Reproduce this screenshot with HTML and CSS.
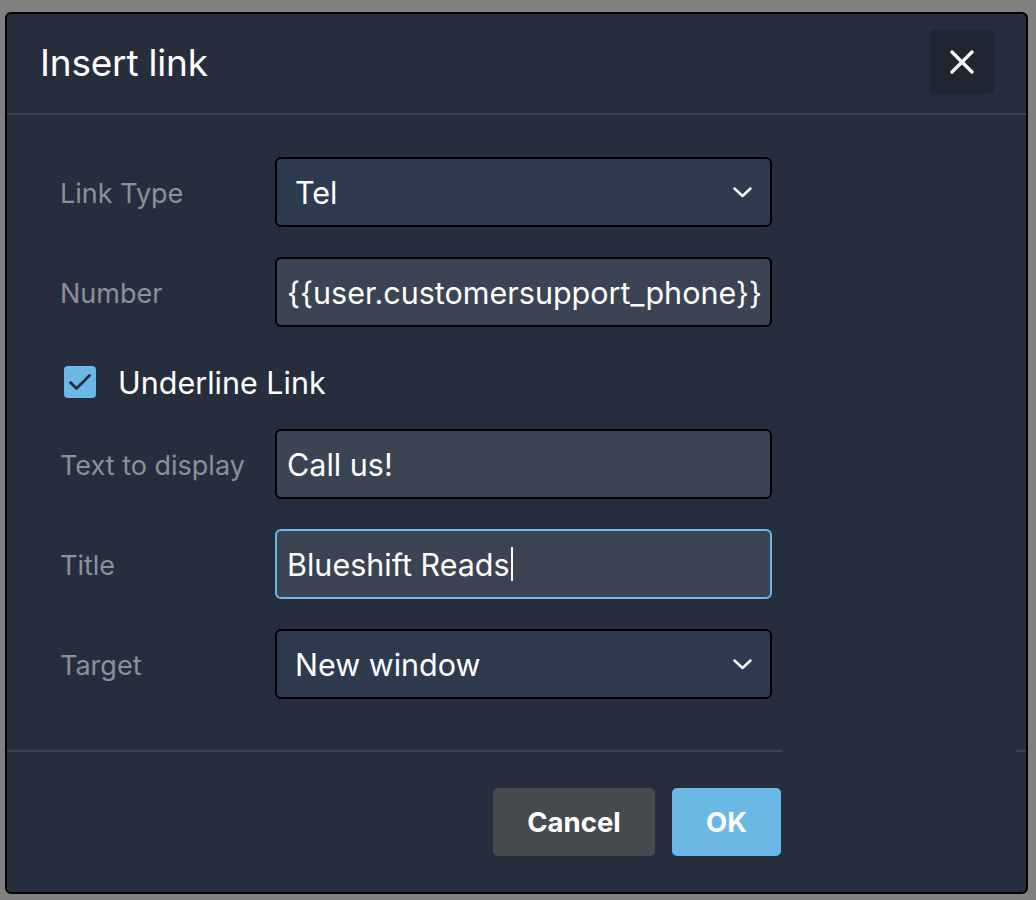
FILE: index.html
```html
<!DOCTYPE html>
<html>
<head>
<meta charset="utf-8">
<link rel="stylesheet" href="styles.css">
</head>
<body>
<div class="dialog">
  <div class="header">
    <h1 class="title">Insert link</h1>
    <button class="close" aria-label="Close">
      <svg width="24" height="24" viewBox="0 0 24 24"><path d="M2 2 L22 22 M22 2 L2 22" stroke="#fff" stroke-width="3.2" stroke-linecap="round" fill="none"/></svg>
    </button>
  </div>
  <div class="body">
    <div class="row">
      <div class="label">Link Type</div>
      <div class="field select">
        <span class="value">Tel</span>
        <svg class="chev" width="19" height="11" viewBox="0 0 19 11"><path d="M1.5 1.5 L9.5 9 L17.5 1.5" stroke="#fff" stroke-width="2.4" fill="none" stroke-linecap="round" stroke-linejoin="round"/></svg>
      </div>
    </div>
    <div class="row">
      <div class="label">Number</div>
      <div class="field input"><span class="value nowrap">{{user.customersupport_phone}}</span></div>
    </div>
    <div class="check-row">
      <span class="checkbox">
        <svg width="24" height="20" viewBox="0 0 24 20"><path d="M2.5 10.5 L8.5 16.5 L21.5 3.5" stroke="#262e3d" stroke-width="2.8" fill="none" stroke-linecap="round" stroke-linejoin="round"/></svg>
      </span>
      <span class="check-label">Underline Link</span>
    </div>
    <div class="row">
      <div class="label">Text to display</div>
      <div class="field input"><span class="value">Call us!</span></div>
    </div>
    <div class="row">
      <div class="label">Title</div>
      <div class="field input focused"><span class="value">Blueshift Reads</span><span class="caret"></span></div>
    </div>
    <div class="row">
      <div class="label">Target</div>
      <div class="field select">
        <span class="value">New window</span>
        <svg class="chev" width="19" height="11" viewBox="0 0 19 11"><path d="M1.5 1.5 L9.5 9 L17.5 1.5" stroke="#fff" stroke-width="2.4" fill="none" stroke-linecap="round" stroke-linejoin="round"/></svg>
      </div>
    </div>
  </div>
  <div class="divider"></div>
  <div class="footer">
    <button class="btn cancel">Cancel</button>
    <button class="btn ok">OK</button>
  </div>
</div>
</body>
</html>
```

FILE: styles.css
```css
html, body {
  margin: 0;
  padding: 0;
}
body {
  background: #808080;
  width: 1036px;
  height: 900px;
  overflow: hidden;
  font-family: "Inter", "Noto Sans", sans-serif;
}
.dialog {
  box-sizing: border-box;
  margin: 12px 0 0 5px;
  width: 1023px;
  height: 882px;
  background: #262e3d;
  border: 2px solid #000;
  border-radius: 6px;
  display: flex;
  flex-direction: column;
}
.header {
  flex: none;
  height: 99px;
  border-bottom: 2px solid #3a4352;
  display: flex;
  align-items: flex-start;
  justify-content: space-between;
  padding: 0 32px 0 33px;
}
.title {
  margin: 0;
  padding-top: 27px;
  font-size: 37px;
  font-weight: 400;
  color: #fff;
  line-height: 44px;
  letter-spacing: -0.2px;
}
.close {
  margin-top: 16px;
  width: 64px;
  height: 64px;
  border: none;
  border-radius: 5px;
  background: #1f2631;
  display: flex;
  align-items: center;
  justify-content: center;
  padding: 0;
}
.body {
  flex: none;
  padding: 42px 0 0 53px;
  display: flex;
  flex-direction: column;
  height: 635px;
  box-sizing: border-box;
}
.row {
  display: flex;
  align-items: center;
  height: 70px;
  margin-bottom: 30px;
}
.label {
  width: 215px;
  color: #8b9099;
  font-size: 27px;
  padding-top: 2px;
}
.field {
  box-sizing: border-box;
  width: 497px;
  height: 70px;
  border: 2px solid #000;
  border-radius: 6px;
  display: flex;
  align-items: center;
  color: #fff;
  font-size: 30.5px;
  overflow: hidden;
}
.select {
  background: #2e3a4d;
  padding: 0 18px 0 18px;
  justify-content: space-between;
}
.input {
  background: #3a4452;
  padding: 0 10px;
}
.focused {
  border-color: #6db8e6;
}
.nowrap {
  white-space: nowrap;
}
.caret {
  display: inline-block;
  width: 2px;
  height: 34px;
  background: #fff;
  margin-left: 1px;
}
.check-row {
  display: flex;
  align-items: center;
  height: 32px;
  margin: 9px 0 31px 4px;
}
.checkbox {
  width: 32px;
  height: 32px;
  border-radius: 4px;
  background: #6bb8e6;
  display: flex;
  align-items: center;
  justify-content: center;
}
.check-label {
  margin-left: 22px;
  color: #fff;
  font-size: 30.5px;
}
.divider {
  flex: none;
  height: 2px;
  background: linear-gradient(to right, #3a4352 0, #3a4352 775px, transparent 775px, transparent 1009px, #3a4352 1009px);
}
.footer {
  flex: 1;
  display: flex;
  justify-content: flex-end;
  align-items: flex-start;
  padding: 36px 245px 0 0;
  gap: 17px;
}
.btn {
  height: 68px;
  border: none;
  border-radius: 5px;
  color: #fff;
  font-family: "Inter", "Noto Sans", sans-serif;
  font-size: 27.5px;
  font-weight: 700;
  padding: 0;
}
.cancel {
  width: 162px;
  background: #464b50;
}
.ok {
  width: 109px;
  background: #6bb8e6;
}
```
